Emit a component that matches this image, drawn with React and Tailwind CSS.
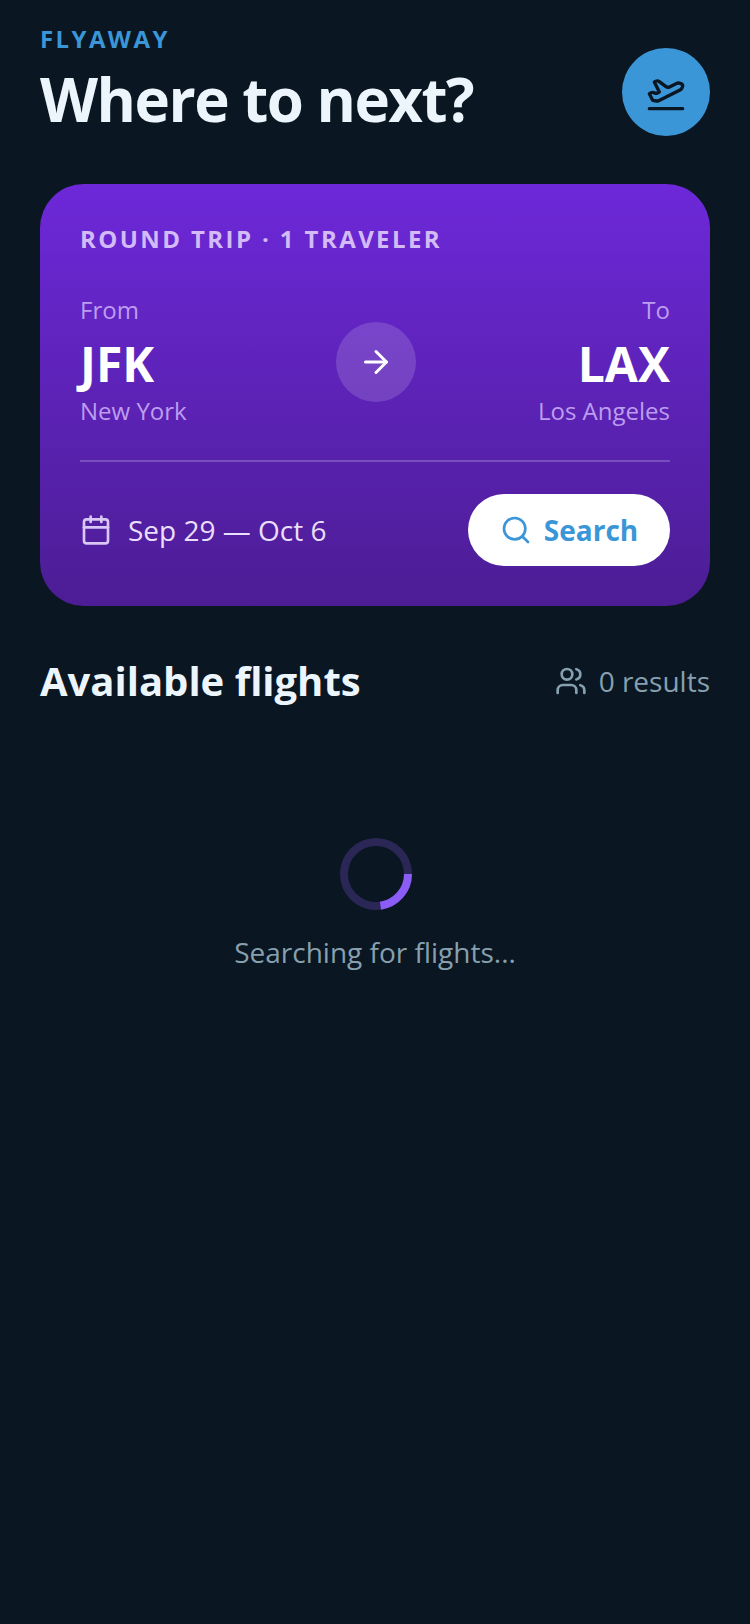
import React from "react";
import { PlaneTakeoff, ArrowRight, Calendar, Search, Users } from "lucide-react";

export default function App() {
  return (
    <div className="min-h-[1624px] bg-[#0a1621] px-10 font-['Open_Sans',sans-serif]">
      <header className="flex items-start justify-between pt-[23px]">
        <div>
          <p className="text-[24px] leading-[32px] font-bold tracking-[2.4px] text-[#3b96d8]">FLYAWAY</p>
          <h1 className="mt-[8px] text-[60px] leading-[72px] font-bold tracking-[-1.5px] text-[#ebf5fb]">Where to next?</h1>
        </div>
        <div className="mt-[25px] flex h-[88px] w-[88px] items-center justify-center rounded-full bg-[#3b96d8]">
          <PlaneTakeoff size={40} strokeWidth={2} color="#0a1621" />
        </div>
      </header>

      <section className="mt-[48px] h-[422px] rounded-[44px] bg-gradient-to-b from-[#6d28d9] to-[#4c1d95] p-10">
        <p className="text-[24px] leading-[30px] font-bold tracking-[2.4px] text-[#d3bbf7]">ROUND TRIP · 1 TRAVELER</p>
        <div className="mt-[40px] grid grid-cols-3 items-center">
          <div>
            <p className="text-[24px] leading-[32px] text-[#bd9df0]">From</p>
            <p className="mt-[6px] text-[48px] leading-[64px] font-bold text-white">JFK</p>
            <p className="mt-[-1px] text-[24px] leading-[32px] text-[#bd9df0]">New York</p>
          </div>
          <div className="flex justify-center pl-[2px] pt-[3px]">
            <div className="flex h-[80px] w-[80px] items-center justify-center rounded-full bg-white/15">
              <ArrowRight size={36} strokeWidth={2} color="#ffffff" />
            </div>
          </div>
          <div className="text-right">
            <p className="text-[24px] leading-[32px] text-[#bd9df0]">To</p>
            <p className="mt-[6px] text-[48px] leading-[64px] font-bold text-white">LAX</p>
            <p className="mt-[-1px] text-[24px] leading-[32px] text-[#bd9df0]">Los Angeles</p>
          </div>
        </div>
        <div className="mt-[33px] h-[2px] bg-white/20" />
        <div className="mt-[32px] flex items-center justify-between">
          <div className="flex items-center gap-4">
            <Calendar size={32} strokeWidth={2} color="#d9c8f6" />
            <span className="text-[28px] leading-[36px] text-[#e9dffa]">Sep 29 — Oct 6</span>
          </div>
          <button className="flex h-[72px] w-[202px] items-center justify-center gap-3 rounded-full bg-white">
            <Search size={32} strokeWidth={2} color="#3b96d8" />
            <span className="text-[28px] leading-[36px] font-bold text-[#3b96d8]">Search</span>
          </button>
        </div>
      </section>

      <div className="mt-[47px] flex items-center justify-between">
        <h2 className="text-[40px] leading-[56px] font-bold text-[#ebf5fb]">Available flights</h2>
        <div className="flex items-center gap-3">
          <Users size={32} strokeWidth={2} color="#87a0b0" />
          <span className="text-[28px] leading-[36px] text-[#87a0b0]">0 results</span>
        </div>
      </div>

      <div className="mt-[129px] flex flex-col items-center">
        <svg className="ml-[2px]" width="72" height="72" viewBox="0 0 72 72" fill="none">
          <circle cx="36" cy="36" r="32" stroke="#2a2756" strokeWidth="8" />
          <path d="M68 36A32 32 0 0 1 40.45 67.69" stroke="#8b5cf6" strokeWidth="8" />
        </svg>
        <p className="mt-[24px] text-[28px] leading-[36px] text-[#87a0b0]">Searching for flights...</p>
      </div>
    </div>
  );
}
